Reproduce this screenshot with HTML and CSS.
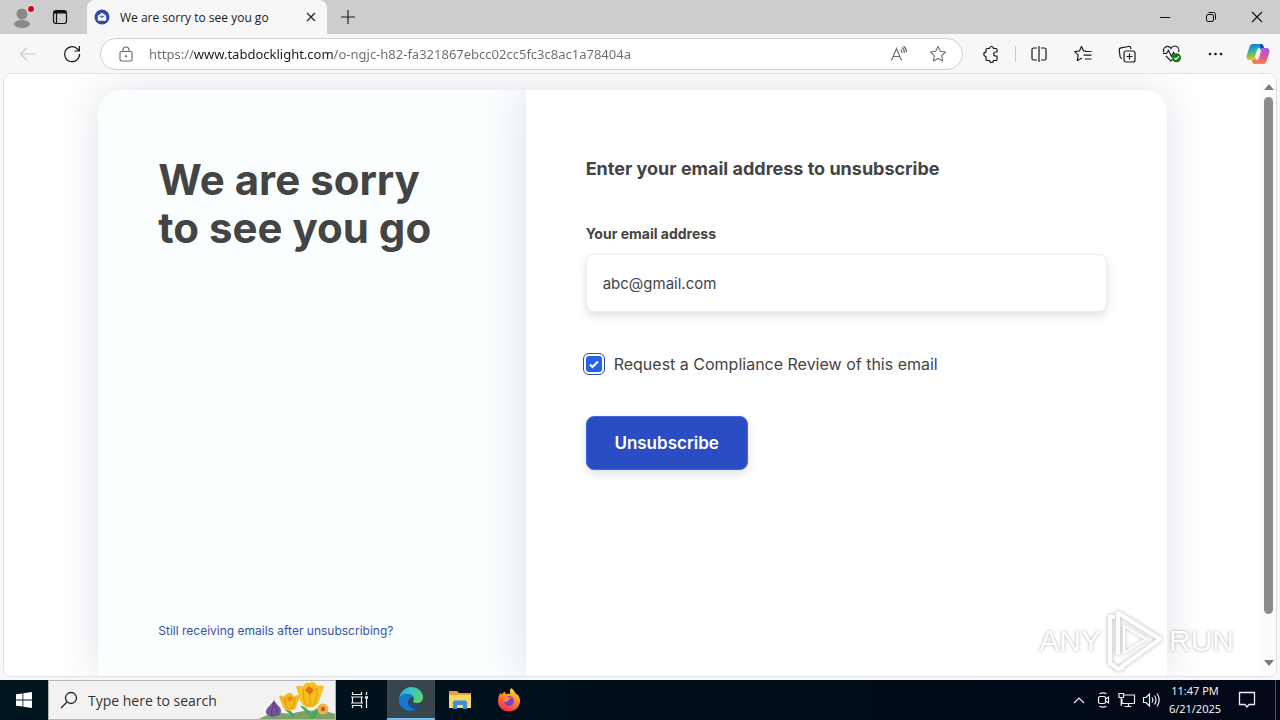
FILE: index.html
```
<!DOCTYPE html>
<html lang="en">
<head>
    <meta charset="UTF-8">
    <meta name="viewport" content="width=device-width, initial-scale=1.0">
    <title>We are sorry to see you go</title>
    <link rel="stylesheet" href="styles.css">
</head>
<body>
    <!-- Tab strip -->
    <header class="tab-strip">
        <button class="strip-btn profile" aria-label="Profile">
            <svg width="30" height="30" viewBox="0 0 30 30">
                <circle cx="15" cy="12" r="5.5" fill="#8c8885"/>
                <ellipse cx="15" cy="22" rx="8" ry="4" fill="#8c8885"/>
                <circle cx="24" cy="7" r="4.5" fill="#dcd6d6"/>
                <circle cx="24" cy="7" r="3" fill="#d00d1c"/>
            </svg>
        </button>
        <button class="strip-btn workspace" aria-label="Tab actions">
            <svg width="16" height="16" viewBox="0 0 16 16" fill="none" stroke="#111">
                <rect x="1.5" y="1.5" width="13" height="13" rx="2.5" stroke-width="1.2"/>
                <path d="M2 3.2h12" stroke-width="2.6"/>
                <path d="M4.5 4v10" stroke-width="1.2"/>
            </svg>
        </button>
        <div class="tab">
            <svg width="16" height="16" viewBox="0 0 16 16">
                <circle cx="8" cy="8" r="7.5" fill="#3347ad"/>
                <path d="M3.8 6.8L8 3.8l4.2 3v4a1 1 0 0 1-1 1H4.8a1 1 0 0 1-1-1z" fill="#fff"/>
                <path d="M4.8 6.8h6.4L8 9.2z" fill="#3c7be0"/>
            </svg>
            <span class="tab-title">We are sorry to see you go</span>
            <button class="tab-close" aria-label="Close tab">
                <svg width="10" height="10" viewBox="0 0 10 10" stroke="#222" stroke-width="1.2"><path d="M1 1l8 8M9 1L1 9"/></svg>
            </button>
        </div>
        <button class="strip-btn new-tab" aria-label="New tab">
            <svg width="14" height="14" viewBox="0 0 14 14" stroke="#222" stroke-width="1.2"><path d="M7 0v14M0 7h14"/></svg>
        </button>
        <div class="window-controls">
            <button aria-label="Minimize"><svg width="10" height="10" viewBox="0 0 10 10" stroke="#111"><path d="M0 5.5h10"/></svg></button>
            <button aria-label="Restore">
                <svg width="12" height="12" viewBox="0 0 12 12" fill="none" stroke="#111"><rect x="1.5" y="3.5" width="7" height="7" rx="1.5"/><path d="M3.5 1.5h5a2 2 0 0 1 2 2v5"/></svg>
            </button>
            <button aria-label="Close"><svg width="12" height="12" viewBox="0 0 12 12" stroke="#111" stroke-width="1.1"><path d="M1 1l10 10M11 1L1 11"/></svg></button>
        </div>
    </header>

    <!-- Toolbar -->
    <nav class="toolbar">
        <button class="tool" aria-label="Back" disabled>
            <svg width="18" height="18" viewBox="0 0 18 18" fill="none" stroke="#cbcbcb" stroke-width="1.2"><path d="M17 9H2M8 2.5L1.5 9 8 15.5"/></svg>
        </button>
        <button class="tool" aria-label="Refresh">
            <svg width="18" height="18" viewBox="0 0 18 18" fill="none" stroke="#1a1a1a" stroke-width="1.2"><path d="M16.6 9A7.5 7.5 0 1 1 14 3.5L16 5.500M16.4 1v5h-5"/></svg>
        </button>
        <div class="address">
            <svg width="14" height="16" viewBox="0 0 14 16" fill="none" stroke="#666" stroke-width="1.1"><rect x="1" y="5.5" width="12" height="9.5" rx="1.5"/><path d="M4 5.5V4a3 3 0 0 1 6 0v1.5"/><circle cx="7" cy="10.2" r="1" fill="#555" stroke="none"/></svg>
            <input class="url" type="text" aria-label="Address" value="https://www.tabdocklight.com/o-ngjc-h82-fa321867ebcc02cc5fc3c8ac1a78404a">
            <button aria-label="Read aloud">
                <svg width="18" height="18" viewBox="0 0 18 18" fill="none" stroke="#6a6a6a" stroke-width="1.1"><path d="M1.5 15.5L6.5 3.5l5 12M3.2 11.5h6.6M10.5 4.5a4 4 0 0 1 1.5 3.5M12 2.5a6 6 0 0 1 2.3 5.5M13.5 1a8 8 0 0 1 3 6.5"/></svg>
            </button>
            <button aria-label="Add to favorites">
                <svg width="18" height="18" viewBox="0 0 18 18" fill="none" stroke="#707070" stroke-width="1.1" stroke-linejoin="round"><path d="M9 1.5l2.3 4.8 5.2.7-3.8 3.7.9 5.3L9 13.5 4.4 16l.9-5.3L1.5 7l5.2-.7z"/></svg>
            </button>
        </div>
        <button class="tool" aria-label="Extensions">
            <svg width="18" height="18" viewBox="0 0 18 18" fill="none" stroke="#1a1a1a" stroke-width="1.2" stroke-linejoin="round"><path d="M5 3.5h2.5a2 2 0 0 1 4 0H14a1 1 0 0 1 1 1V7h-1.3a2 2 0 0 0 0 4H15v3.5a1 1 0 0 1-1 1h-2.5a2 2 0 0 1-4 0H5a1 1 0 0 1-1-1v-3a2.2 2.2 0 0 1 0-4.4V4.5a1 1 0 0 1 1-1z"/></svg>
        </button>
        <span class="divider"></span>
        <button class="tool" aria-label="Split screen">
            <svg width="18" height="18" viewBox="0 0 18 18" fill="none" stroke="#1a1a1a" stroke-width="1.2"><path d="M7 3H3.5A1.5 1.5 0 0 0 2 4.5v9A1.5 1.5 0 0 0 3.5 15H7M11 3h3.5A1.5 1.5 0 0 1 16 4.5v9a1.5 1.5 0 0 1-1.5 1.5H11M9 1v16"/></svg>
        </button>
        <button class="tool" aria-label="Favorites">
            <svg width="18" height="18" viewBox="0 0 18 18" fill="none" stroke="#1a1a1a" stroke-width="1.2" stroke-linejoin="round"><path d="M12 6.2L9.6 6 7.5 1.5 5.4 6l-4.7.7 3.5 3.5-.9 5.3L8 13M11 6.5h6.5M9.5 10.2h8M11 14h6.5"/></svg>
        </button>
        <button class="tool" aria-label="Collections">
            <svg width="18" height="18" viewBox="0 0 18 18" fill="none" stroke="#1a1a1a" stroke-width="1.2"><rect x="6" y="6" width="11" height="11" rx="2"/><path d="M11.5 8.5v6M8.5 11.5h6M4 13.5l-.7-.3a2 2 0 0 1-1.2-1.5L1.2 5a2 2 0 0 1 1.7-2.2l7.6-1.3a2 2 0 0 1 2.3 1.6l.2 1"/></svg>
        </button>
        <button class="tool" aria-label="Browser essentials">
            <svg width="20" height="18" viewBox="0 0 20 18" fill="none" stroke="#1a1a1a" stroke-width="1.2"><path d="M3 7.5A4 4 0 0 1 10 3.5 4 4 0 0 1 17.5 7M5 11l5 5 1.5-1.5M2 8.500h3.500l2-3 3 6 2-4 1 1.5"/><circle cx="15.5" cy="12.8" r="4.5" fill="#107c10" stroke="none"/><path d="M13.3 13l1.6 1.5 2.9-3" stroke="#fff"/></svg>
        </button>
        <button class="tool" aria-label="Settings and more">
            <svg width="16" height="4" viewBox="0 0 16 4" fill="#1a1a1a"><circle cx="3" cy="2" r="1.3"/><circle cx="8.5" cy="2" r="1.3"/><circle cx="14" cy="2" r="1.3"/></svg>
        </button>
        <button class="tool copilot" aria-label="Copilot">
            <svg width="24" height="22" viewBox="0 0 24 22">
                <defs>
                    <linearGradient id="cp1" x1="0" y1="0" x2="0.3" y2="1"><stop offset="0" stop-color="#1b65d8"/><stop offset=".4" stop-color="#1fa7c4"/><stop offset=".7" stop-color="#7fc04a"/><stop offset="1" stop-color="#f2c230"/></linearGradient>
                    <linearGradient id="cp2" x1="0.6" y1="0" x2="0.3" y2="1"><stop offset="0" stop-color="#a259e8"/><stop offset=".5" stop-color="#e3568f"/><stop offset="1" stop-color="#fb8a4b"/></linearGradient>
                </defs>
                <path d="M7 1h8c2 0 2.500 2 3 4h-4c-2 0-2.8 1-3.300 3L9 14c-.6 2-1.5 3-3 3H4c-3 0-4-2-3.2-5L3.5 4C4.2 2 5 1 7 1z" fill="url(#cp1)"/>
                <path d="M17 21H9c-2 0-2.5-2-3-4h4c2 0 2.8-1 3.3-3L15 8c.6-2 1.5-3 3-3h2c3 0 4 2 3.2 5l-2.7 8c-.7 2-1.5 3-3.5 3z" fill="url(#cp2)"/>
                <path d="M14 1c3 0 3.5 1.5 4 4-2 0-3 1-3.5 3z" fill="#1d46b5"/>
                <path d="M10 21c-3 0-3.5-1.5-4-4 2 0 3-1 3.5-3z" fill="#f47a38"/>
            </svg>
        </button>
    </nav>

    <!-- Web page -->
    <div class="viewport">
        <main class="page">
            <div class="card">
                <section class="intro">
                    <h1>We are sorry<br>to see you go</h1>
                    <a href="#">Still receiving emails after unsubscribing?</a>
                </section>
                <form class="unsubscribe">
                    <h2>Enter your email address to unsubscribe</h2>
                    <label class="field-label" for="email">Your email address</label>
                    <input class="email" type="text" id="email" value="abc@gmail.com">
                    <div class="check-row">
                        <input type="checkbox" id="review" checked>
                        <label for="review">Request a Compliance Review of this email</label>
                    </div>
                    <button class="submit" type="button">Unsubscribe</button>
                </form>
            </div>
        </main>
        <div class="scrollbar">
            <svg width="10" height="6" viewBox="0 0 10 6" fill="#7c7c7c"><path d="M5 0l5 6H0z"/></svg>
            <div class="track"><div class="thumb"></div></div>
            <svg width="10" height="6" viewBox="0 0 10 6" fill="#7c7c7c"><path d="M5 6l5-6H0z"/></svg>
        </div>
        <div class="watermark">
            <span>ANY</span>
            <svg width="60" height="64" viewBox="0 0 60 64" fill="none" stroke="#fff" stroke-width="4" stroke-linejoin="round">
                <path d="M13 46V4L55 30 16 58"/>
                <path d="M10 8H5v46l8 6 6-2"/>
                <path d="M19 17v27l22-14z" stroke-width="2"/>
            </svg>
            <span>RUN</span>
        </div>
    </div>

    <!-- Taskbar -->
    <footer class="taskbar">
        <button class="task start" aria-label="Start">
            <svg width="16" height="16" viewBox="0 0 16 16" fill="#fff"><path d="M0 2.3L6.5 1.4v6.2H0zM7.3 1.3L16 0v7.6H7.3zM0 8.4h6.5v6.2L0 13.7zM7.3 8.4H16V16l-8.7-1.3z"/></svg>
        </button>
        <div class="search">
            <svg width="18" height="18" viewBox="0 0 18 18" fill="none" stroke="#222" stroke-width="1.3"><circle cx="11" cy="7" r="5.5"/><path d="M7 11l-6 6"/></svg>
            <input type="text" aria-label="Search" placeholder="Type here to search">
            <svg width="76" height="38" viewBox="0 0 76 38">
                <path d="M0 38c10-6 20-7 32-5 16-5 34-4 44 0v5z" fill="#7da267"/>
                <path d="M15 19c2 5 8 7 7 12-1 6-13 6-15 1-1-5 5-7 8-13z" fill="#75559b"/>
                <path d="M15 21c-1 6-3 8-2 14M15 21c2 6 3 8 3 13" fill="none" stroke="#543a79"/>
                <path d="M34 38c0-4-6-7-8-10 5 1 8 4 9 8M52 38c0-5-8-9-10-13 6 2 9 6 10 11 1-5 4-8 10-10-2 5-6 7-8 12z" fill="#4ca55e" stroke="#4ca55e"/>
                <path d="M20 15c2-1 4 0 5 1 1-3 4-4 6-4 2 0 3 2 4 4 2-2 4-2 6-1-1 4-3 7-4 11-2 5-10 5-13 0-1-4-3-7-4-11z" fill="#f6b91c"/>
                <path d="M26 16c-1 5 1 9 4 12M35 16c1 5 0 9-3 12" stroke="#df8a16" fill="none"/>
                <path d="M37 6c3-2 5-1 7 0 1-4 4-5 7-4 2-2 6-1 7 3 3-1 5-1 7 1-2 5-3 9-5 14-3 8-14 9-18 1-2-5-3-10-5-15z" fill="#f8bf20"/>
                <path d="M45 7c-2 8 0 14 4 19M57 7c2 8 0 14-4 19M51 14v12" stroke="#e59617" fill="none"/>
                <path d="M46 9l4-4 5 4-4 5z" fill="#e86f19"/>
                <path d="M28 17l3-2 3 2-3 4z" fill="#e8891c"/>
                <circle cx="64" cy="28" r="5.500" fill="#f2b14c"/><circle cx="64" cy="28" r="2.2" fill="#c25c1a"/>
            </svg>
        </div>
        <button class="task task-view" aria-label="Task View">
            <svg width="18" height="16" viewBox="0 0 18 16" fill="none" stroke="#f2f2f2" stroke-width="1.2"><path d="M1.5 0v2.5h9V0M1.5 16v-2.5h9V16M0 5h12M0 11h12M1.5 5v6M10.5 5v6M15.5 0v3M15.5 7v9"/><path d="M14 5.500h3" stroke-width="2.5"/></svg>
        </button>
        <button class="task active" aria-label="Microsoft Edge">
            <svg width="24" height="24" viewBox="0 0 24 24">
                <defs>
                    <linearGradient id="e1" x1="0" y1="0" x2="1" y2=".4"><stop offset="0" stop-color="#2f9fe2"/><stop offset=".5" stop-color="#38c1c9"/><stop offset="1" stop-color="#5bd572"/></linearGradient>
                </defs>
                <path d="M0 12C1 4 7 0 12 0c7 0 12 5 12 10 0 4-3 6-6 6-3 0-4.5-1-3.5-2.5C16 11 13.5 7 9 7c-5 0-8 3-9 5z" fill="url(#e1)"/>
                <path d="M0 12c1-4 5-5.500 9-5 3 .3 5.5 2 5.7 4.5C13 9.5 9 11 9 15c0 4 4 7 8 7-8 5-18-1-17-10z" fill="#1677cf"/>
                <path d="M9.5 13C7 18 12 22 17 22c2-.8 4-2.5 5-4-1-.2-2 1-5.5.8-4-.3-7-2.8-7-5.8z" fill="#12509c"/>
            </svg>
        </button>
        <button class="task" aria-label="File Explorer">
            <svg width="22" height="20" viewBox="0 0 22 20"><path d="M0 1h8l2 2h12v5H0z" fill="#e9a22d"/><path d="M0 5h22v13H0z" fill="#fbd668"/><path d="M4 19v-7a1.5 1.5 0 0 1 1.5-1.5h11A1.5 1.5 0 0 1 18 12v7h-4v-4H8v4z" fill="#3d8fd6"/></svg>
        </button>
        <button class="task" aria-label="Firefox">
            <svg width="24" height="24" viewBox="0 0 24 24">
                <defs>
                    <linearGradient id="f1" x1=".8" y1="0" x2=".3" y2="1"><stop offset="0" stop-color="#ffe14a"/><stop offset=".45" stop-color="#ff8a27"/><stop offset="1" stop-color="#f2274f"/></linearGradient>
                </defs>
                <path d="M14 0c3 2 4 4 4.5 5.500C22 7 23.5 11 23 14c-1 6-5.500 9.500-11 9.500C5.5 23.5 1 19 1 13c0-4 1.500-7 3-8.500 0 1 0 1.500.7 2C6 4.500 7.5 4 8 3.500L8.500 6c2 0 3.500-.2 5-.2C12.500 4 13 1.500 14 0z" fill="url(#f1)"/>
                <circle cx="12" cy="13" r="5" fill="#7641d8"/>
                <path d="M5 8c3-1.500 5-.5 6.500 1.500h3c0 1.500-3 1.800-3 3-.5 1.500-3 1-4.500 1.500z" fill="#ff8a27"/>
            </svg>
        </button>
        <div class="tray">
            <button aria-label="Show hidden icons"><svg width="12" height="8" viewBox="0 0 12 8" fill="none" stroke="#eee" stroke-width="1.2"><path d="M1 7l5-5 5 5"/></svg></button>
            <button aria-label="Meet Now"><svg width="14" height="16" viewBox="0 0 14 16" fill="none" stroke="#eee" stroke-width="1.2"><rect x="2.5" y="4.5" width="7" height="7" rx="1.5"/><path d="M9.5 7l3-2v6l-3-2M3.5 1.7c2-1 5-1 7 0M3.5 14.3c2 1 5 1 7 0"/></svg></button>
            <button aria-label="Network"><svg width="18" height="16" viewBox="0 0 18 16" fill="none" stroke="#eee" stroke-width="1.2"><path d="M6 3h10.5v8.5H4V7M10.5 11.5v3M6.5 14.5h7M1 1.5h4.500v4H1zM3.2 5.5V14"/></svg></button>
            <button aria-label="Volume"><svg width="18" height="16" viewBox="0 0 18 16" fill="none" stroke="#eee" stroke-width="1.2"><path d="M1.5 5.5H4L7.5 2v12L4 10.5H1.5zM10 5.5c1 1.5 1 3.5 0 5M12.5 3.5c2 2.500 2 6.500 0 9M15 1.500c2.700 4 2.700 9 0 13"/></svg></button>
            <div class="clock"><span>11:47 PM</span><span>6/21/2025</span></div>
            <button class="notifications" aria-label="Notifications"><svg width="18" height="18" viewBox="0 0 18 18" fill="none" stroke="#eee" stroke-width="1.3"><path d="M1.5 1.5h15v12H11L9 16l-2-2.500H1.5z"/></svg></button>
        </div>
    </footer>
</body>
</html>
```

FILE: styles.css
```
* {
    box-sizing: border-box;
}
body {
    margin: 0;
    height: 100vh;
    display: flex;
    flex-direction: column;
    overflow: hidden;
    background: #f7f7f7;
    color: #444;
    font-family: "Open Sans", "Noto Sans", sans-serif;
    font-size: 12px;
}
svg {
    display: block;
    flex: none;
}
button {
    display: flex;
    align-items: center;
    justify-content: center;
    padding: 0;
    border: none;
    background: none;
    font-family: inherit;
}

/* Tab strip */
.tab-strip {
    display: flex;
    flex: none;
    height: 34px;
    background: #cdcdcd;
}
.strip-btn {
    width: 42px;
}
.profile {
    width: 44px;
}
.workspace {
    width: 32px;
    margin-right: 11px;
}
.tab {
    display: flex;
    align-items: center;
    gap: 10px;
    width: 240px;
    padding: 0 11px 0 7px;
    background: #f7f7f7;
    border-radius: 8px 8px 0 0;
}
.tab-title {
    flex: 1;
    color: #1b1b1b;
    white-space: nowrap;
}
.window-controls {
    display: flex;
    margin-left: auto;
}
.window-controls button {
    width: 46px;
}

/* Toolbar */
.toolbar {
    display: flex;
    flex: none;
    align-items: center;
    height: 39px;
    padding: 0 1px 0 6px;
}
.tool {
    width: 44px;
    height: 32px;
}
.copilot {
    width: 42px;
}
.address {
    display: flex;
    flex: 1;
    align-items: center;
    height: 32px;
    margin: 0 6px;
    padding: 0 15px 0 18px;
    background: #fff;
    border: 1px solid #d0d0d0;
    border-radius: 16px;
}
.address button {
    width: 18px;
    margin-left: 21px;
}
/* the host name is darker than the rest of the address */
.url {
    flex: 1;
    min-width: 0;
    margin-left: 16px;
    padding: 0;
    border: none;
    outline: none;
    font-family: "Noto Sans", sans-serif;
    font-size: 13px;
    color: #6b6b6b;
    background: linear-gradient(90deg, #6b6b6b 45px, #1b1b1b 45px, #1b1b1b 184px, #6b6b6b 184px);
    -webkit-background-clip: text;
    background-clip: text;
    -webkit-text-fill-color: transparent;
}
.divider {
    width: 1px;
    height: 16px;
    margin: 0 1px 0 2px;
    background: #c8c8c8;
}

/* Web page */
.viewport {
    position: relative;
    display: flex;
    flex: 1;
    min-height: 0;
    margin: 0 3px 3px;
    overflow: hidden;
    background: #fff;
    border: 1px solid #e2e2e4;
    border-radius: 8px;
    font-family: Inter, "Liberation Sans", sans-serif;
}
.page {
    flex: 1;
    padding-top: 16px;
    overflow: hidden;
}
.card {
    display: flex;
    width: 85%;
    height: 100%;
    margin: 0 auto;
    overflow: hidden;
    border-radius: 24px 24px 0 0;
    box-shadow: 0 0 40px rgba(50, 30, 90, 0.14);
}
.intro {
    display: flex;
    flex-direction: column;
    justify-content: space-between;
    align-items: flex-start;
    width: 40%;
    padding: 66px 60px 36px;
    background: #fafeff;
}
.intro h1 {
    margin: 0;
    font-size: 42px;
    line-height: 48px;
    font-weight: 700;
    white-space: nowrap;
}
.intro a {
    color: #3950a8;
    line-height: 18px;
    text-decoration: none;
}
.unsubscribe {
    width: 60%;
    padding: 66px 60px;
    background: #fff;
    box-shadow: 0 0 40px rgba(50, 50, 90, 0.14);
}
.unsubscribe h2 {
    margin: 0 0 42px;
    font-size: 18px;
    line-height: 26px;
    font-weight: 700;
}
.field-label {
    display: block;
    margin-bottom: 10px;
    font-size: 14px;
    line-height: 20px;
    font-weight: 700;
}
.email {
    display: block;
    width: 100%;
    height: 58px;
    padding: 0 16px;
    color: #444;
    background: #fff;
    border: 1px solid #ececec;
    border-radius: 8px;
    box-shadow: 0 4px 10px rgba(0, 0, 0, 0.12);
    font-family: inherit;
    font-size: 15px;
}
.check-row {
    display: flex;
    align-items: center;
    gap: 12px;
    margin: 40px 0;
    font-size: 16px;
    line-height: 24px;
}
.check-row input {
    appearance: none;
    width: 16px;
    height: 16px;
    margin: 0;
    border-radius: 3px;
    outline: 1px solid #2a4dac;
    outline-offset: 2px;
    background: #2563eb url("data:image/svg+xml,%3Csvg xmlns='http://www.w3.org/2000/svg' viewBox='0 0 16 16'%3E%3Cpath d='M4 8.5l2.5 2.5L12 5.5' fill='none' stroke='white' stroke-width='2'/%3E%3C/svg%3E");
}
.submit {
    width: 162px;
    height: 54px;
    color: #fff;
    background: #2b4dc3;
    border: 1px solid #4169e1;
    border-radius: 8px;
    box-shadow: 0 4px 10px rgba(0, 0, 0, 0.12);
    font-size: 17px;
    font-weight: 600;
}
.scrollbar {
    display: flex;
    flex-direction: column;
    align-items: center;
    width: 15px;
    padding: 10px 0;
    background: #fcfcfc;
}
.track {
    flex: 1;
    padding: 7px 0;
}
.thumb {
    width: 9px;
    height: 93%;
    background: #8b8b8b;
    border-radius: 5px;
}
.watermark {
    position: absolute;
    right: 42px;
    bottom: 3px;
    display: flex;
    align-items: center;
    gap: 4px;
    color: #fff;
    font-family: "Liberation Sans", sans-serif;
    font-size: 30px;
    text-shadow: 0 0 3px rgba(0, 0, 0, 0.35);
}
.watermark svg {
    filter: drop-shadow(0 0 2px rgba(0, 0, 0, 0.3));
}

/* Taskbar */
.taskbar {
    display: flex;
    flex: none;
    height: 40px;
    background: linear-gradient(90deg, #00151d, #020817);
}
.task {
    width: 49px;
}
.start {
    width: 48px;
}
.task-view {
    width: 48px;
    margin-right: 3px;
}
.active {
    width: 48px;
    background: #36474d;
    border-bottom: 2px solid #76b9ed;
}
.search {
    display: flex;
    align-items: center;
    width: 288px;
    padding-left: 11px;
    background: #f2f2f2;
    border: 1px solid #b5b5b5;
}
.search input {
    flex: 1;
    min-width: 0;
    margin-left: 10px;
    padding: 0;
    border: none;
    background: none;
    font-family: inherit;
    font-size: 14px;
}
.search input::placeholder {
    color: #333;
}
.tray {
    display: flex;
    margin-left: auto;
    margin-right: 4px;
    padding-right: 4px;
    border-right: 1px solid #4a4f58;
}
.tray button {
    width: 24px;
}
.clock {
    display: flex;
    flex-direction: column;
    align-items: center;
    justify-content: center;
    width: 56px;
    margin-left: 4px;
    color: #fff;
    font-size: 11px;
    line-height: 18px;
}
.tray .notifications {
    width: 48px;
}
```
